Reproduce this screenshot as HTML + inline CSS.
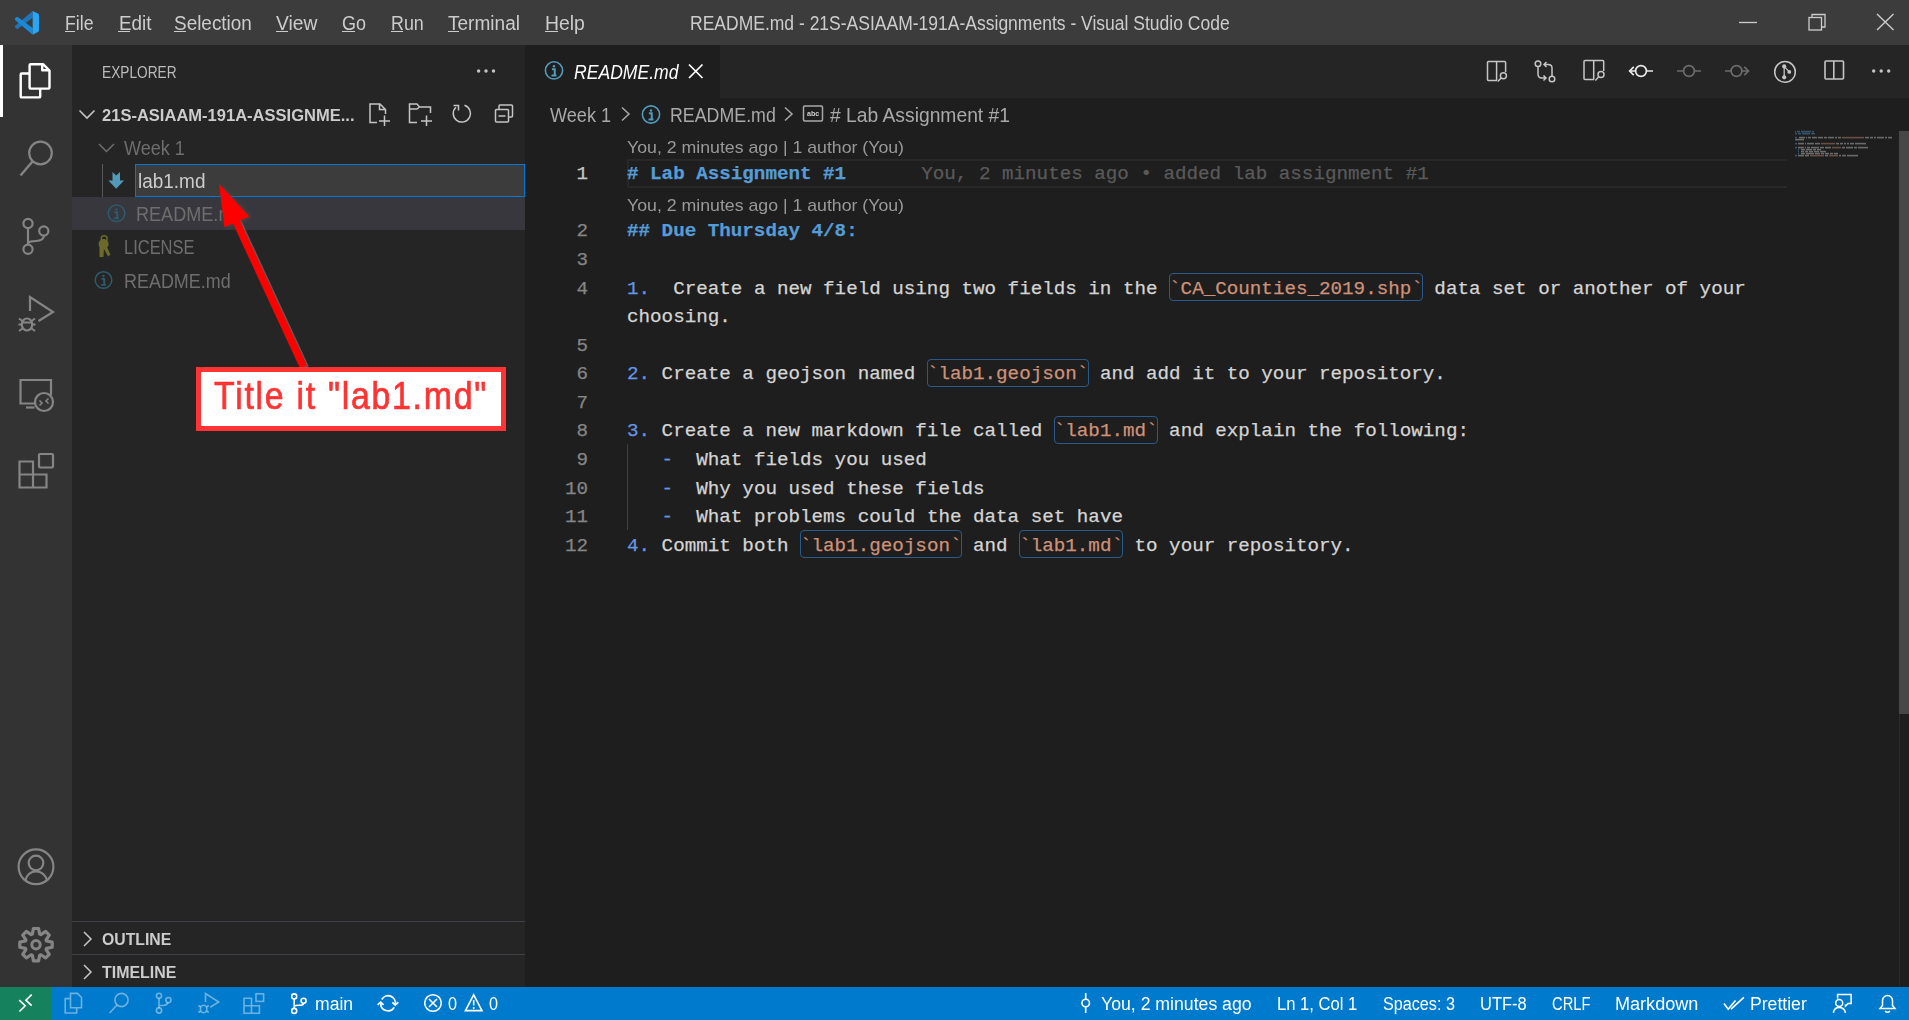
<!DOCTYPE html>
<html><head><meta charset="utf-8">
<style>
*{margin:0;padding:0;box-sizing:border-box}
html,body{width:1909px;height:1020px;overflow:hidden;background:#1e1e1e;font-family:"Liberation Sans",sans-serif;color:#cccccc}
.a{position:absolute;white-space:pre}
.mono{font-family:"Liberation Mono",monospace;font-size:19.23px;line-height:1;color:#d4d4d4;-webkit-text-stroke:0.25px currentColor}
.h{color:#569cd6;font-weight:bold}
.n{color:#6796e6}
.c{color:#ce9178}
svg{position:absolute;left:0;top:0;z-index:1}
</style></head><body>
<div class="a" style="left:0px;top:0px;width:1909px;height:45px;background:#3c3c3c;"></div>
<div class="a" style="left:0px;top:45px;width:72px;height:942px;background:#333333;"></div>
<div class="a" style="left:72px;top:45px;width:453px;height:942px;background:#252526;"></div>
<div class="a" style="left:525px;top:45px;width:1384px;height:53px;background:#252526;"></div>
<div class="a" style="left:525px;top:45px;width:195px;height:53px;background:#1e1e1e;"></div>
<div class="a" style="left:0px;top:987px;width:1909px;height:33px;background:#007acc;"></div>
<div class="a" style="left:0px;top:987px;width:51px;height:33px;background:#16825d;"></div>
<div class="a" style="left:0px;top:45px;width:3px;height:72px;background:#ffffff;"></div>
<div class="a" style="left:65.00px;top:13.00px;font-size:20px;line-height:1;color:#cccccc;font-family:'Liberation Sans',sans-serif;transform:scaleX(0.8851);transform-origin:0 0">File</div>
<div class="a" style="left:65px;top:31px;width:10px;height:1px;background:#cccccc;"></div>
<div class="a" style="left:118.50px;top:13.00px;font-size:20px;line-height:1;color:#cccccc;font-family:'Liberation Sans',sans-serif;transform:scaleX(0.9420);transform-origin:0 0">Edit</div>
<div class="a" style="left:118px;top:31px;width:12px;height:1px;background:#cccccc;"></div>
<div class="a" style="left:174.30px;top:13.00px;font-size:20px;line-height:1;color:#cccccc;font-family:'Liberation Sans',sans-serif;transform:scaleX(0.9465);transform-origin:0 0">Selection</div>
<div class="a" style="left:174px;top:31px;width:12px;height:1px;background:#cccccc;"></div>
<div class="a" style="left:276.40px;top:13.00px;font-size:20px;line-height:1;color:#cccccc;font-family:'Liberation Sans',sans-serif;transform:scaleX(0.9628);transform-origin:0 0">View</div>
<div class="a" style="left:276px;top:31px;width:12px;height:1px;background:#cccccc;"></div>
<div class="a" style="left:342.00px;top:13.00px;font-size:20px;line-height:1;color:#cccccc;font-family:'Liberation Sans',sans-serif;transform:scaleX(0.8989);transform-origin:0 0">Go</div>
<div class="a" style="left:342px;top:31px;width:13px;height:1px;background:#cccccc;"></div>
<div class="a" style="left:391.00px;top:13.00px;font-size:20px;line-height:1;color:#cccccc;font-family:'Liberation Sans',sans-serif;transform:scaleX(0.8937);transform-origin:0 0">Run</div>
<div class="a" style="left:391px;top:31px;width:12px;height:1px;background:#cccccc;"></div>
<div class="a" style="left:448.00px;top:13.00px;font-size:20px;line-height:1;color:#cccccc;font-family:'Liberation Sans',sans-serif;transform:scaleX(0.9524);transform-origin:0 0">Terminal</div>
<div class="a" style="left:448px;top:31px;width:11px;height:1px;background:#cccccc;"></div>
<div class="a" style="left:544.80px;top:13.00px;font-size:20px;line-height:1;color:#cccccc;font-family:'Liberation Sans',sans-serif;transform:scaleX(0.9684);transform-origin:0 0">Help</div>
<div class="a" style="left:545px;top:31px;width:13px;height:1px;background:#cccccc;"></div>
<div class="a" style="left:690.30px;top:12.50px;font-size:20px;line-height:1;color:#cccccc;font-family:'Liberation Sans',sans-serif;transform:scaleX(0.8753);transform-origin:0 0">README.md - 21S-ASIAAM-191A-Assignments - Visual Studio Code</div>
<div class="a" style="left:102.00px;top:64.15px;font-size:17px;line-height:1;color:#bbbbbb;font-family:'Liberation Sans',sans-serif;transform:scaleX(0.8048);transform-origin:0 0">EXPLORER</div>
<div class="a" style="left:102.00px;top:107.05px;font-size:17px;line-height:1;color:#cccccc;font-family:'Liberation Sans',sans-serif;font-weight:bold;transform:scaleX(0.9721);transform-origin:0 0">21S-ASIAAM-191A-ASSIGNME...</div>
<div class="a" style="left:123.60px;top:138.00px;font-size:20px;line-height:1;color:#6e6e6e;font-family:'Liberation Sans',sans-serif;transform:scaleX(0.9021);transform-origin:0 0">Week 1</div>
<div class="a" style="left:102px;top:164px;width:1px;height:66px;background:#585858;"></div>
<div class="a" style="left:72px;top:197px;width:453px;height:33px;background:#37373d;"></div>
<div class="a" style="left:135px;top:164px;width:390px;height:33px;background:#0078d4;"></div>
<div class="a" style="left:136px;top:165px;width:388px;height:31px;background:#3c3c3c;"></div>
<div class="a" style="left:137.80px;top:171.00px;font-size:20px;line-height:1;color:#cccccc;font-family:'Liberation Sans',sans-serif;transform:scaleX(0.9480);transform-origin:0 0">lab1.md</div>
<div class="a" style="left:135.90px;top:204.20px;font-size:20px;line-height:1;color:#6e6e6e;font-family:'Liberation Sans',sans-serif;transform:scaleX(0.9040);transform-origin:0 0">README.m</div>
<div class="a" style="left:123.50px;top:237.30px;font-size:20px;line-height:1;color:#6e6e6e;font-family:'Liberation Sans',sans-serif;transform:scaleX(0.8236);transform-origin:0 0">LICENSE</div>
<div class="a" style="left:123.50px;top:270.50px;font-size:20px;line-height:1;color:#6e6e6e;font-family:'Liberation Sans',sans-serif;transform:scaleX(0.8974);transform-origin:0 0">README.md</div>
<div class="a" style="left:72px;top:921px;width:453px;height:1px;background:#3f3f46;"></div>
<div class="a" style="left:72px;top:954px;width:453px;height:1px;background:#3f3f46;"></div>
<div class="a" style="left:102.00px;top:931.15px;font-size:17px;line-height:1;color:#cccccc;font-family:'Liberation Sans',sans-serif;font-weight:bold;transform:scaleX(0.9286);transform-origin:0 0">OUTLINE</div>
<div class="a" style="left:102.00px;top:964.15px;font-size:17px;line-height:1;color:#cccccc;font-family:'Liberation Sans',sans-serif;font-weight:bold;transform:scaleX(0.9382);transform-origin:0 0">TIMELINE</div>
<div class="a" style="left:573.60px;top:61.70px;font-size:20px;line-height:1;color:#ffffff;font-family:'Liberation Sans',sans-serif;font-style:italic;transform:scaleX(0.8787);transform-origin:0 0">README.md</div>
<div class="a" style="left:549.70px;top:105.00px;font-size:20px;line-height:1;color:#a9a9a9;font-family:'Liberation Sans',sans-serif;transform:scaleX(0.9050);transform-origin:0 0">Week 1</div>
<div class="a" style="left:670.40px;top:105.00px;font-size:20px;line-height:1;color:#a9a9a9;font-family:'Liberation Sans',sans-serif;transform:scaleX(0.8898);transform-origin:0 0">README.md</div>
<div class="a" style="left:806.80px;top:109.70px;font-size:8px;line-height:1;color:#d0d0d0;font-family:'Liberation Sans',sans-serif;font-weight:bold;transform:scaleX(0.8841);transform-origin:0 0">abc</div>
<div class="a" style="left:830.00px;top:105.00px;font-size:20px;line-height:1;color:#a9a9a9;font-family:'Liberation Sans',sans-serif;transform:scaleX(0.9636);transform-origin:0 0"># Lab Assignment #1</div>
<div class="a" style="left:627px;top:159px;width:1160px;height:2px;background:#282828;"></div>
<div class="a" style="left:627px;top:185.5px;width:1160px;height:2px;background:#282828;"></div>
<div class="a" style="left:627px;top:159px;width:2px;height:28.5px;background:#282828;"></div>
<div class="a" style="left:627.00px;top:138.85px;font-size:17px;line-height:1;color:#999999;font-family:'Liberation Sans',sans-serif;transform:scaleX(1.0418);transform-origin:0 0">You, 2 minutes ago | 1 author (You)</div>
<div class="a" style="left:627.00px;top:196.75px;font-size:17px;line-height:1;color:#999999;font-family:'Liberation Sans',sans-serif;transform:scaleX(1.0418);transform-origin:0 0">You, 2 minutes ago | 1 author (You)</div>
<div class="a mono" style="left:576.46px;top:165.31px;color:#c6c6c6">1</div>
<div class="a mono" style="left:576.46px;top:222.45px;color:#858585">2</div>
<div class="a mono" style="left:576.46px;top:251.02px;color:#858585">3</div>
<div class="a mono" style="left:576.46px;top:279.59px;color:#858585">4</div>
<div class="a mono" style="left:576.46px;top:336.73px;color:#858585">5</div>
<div class="a mono" style="left:576.46px;top:365.30px;color:#858585">6</div>
<div class="a mono" style="left:576.46px;top:393.87px;color:#858585">7</div>
<div class="a mono" style="left:576.46px;top:422.44px;color:#858585">8</div>
<div class="a mono" style="left:576.46px;top:451.01px;color:#858585">9</div>
<div class="a mono" style="left:564.92px;top:479.58px;color:#858585">10</div>
<div class="a mono" style="left:564.92px;top:508.15px;color:#858585">11</div>
<div class="a mono" style="left:564.92px;top:536.72px;color:#858585">12</div>
<div class="a mono" style="left:627px;top:165.31px"><span class="h"># Lab Assignment #1</span></div>
<div class="a mono" style="left:921.27px;top:165.31px;color:#5a5a5a">You, 2 minutes ago • added lab assignment #1</div>
<div class="a mono" style="left:627px;top:222.45px"><span class="h">## Due Thursday 4/8:</span></div>
<div class="a mono" style="left:627px;top:279.59px"><span class="n">1.</span>  Create a new field using two fields in the <span class="c">`CA_Counties_2019.shp`</span> data set or another of your</div>
<div class="a" style="left:1169.38px;top:273.3px;width:253.88px;height:27.5px;background:transparent;border:1px solid #2a5a8c;border-radius:4px"></div>
<div class="a mono" style="left:627px;top:308.16px">choosing.</div>
<div class="a mono" style="left:627px;top:365.30px"><span class="n">2.</span> Create a geojson named <span class="c">`lab1.geojson`</span> and add it to your repository.</div>
<div class="a" style="left:927.04px;top:359.01px;width:161.56px;height:27.5px;background:transparent;border:1px solid #2a5a8c;border-radius:4px"></div>
<div class="a mono" style="left:627px;top:422.44px"><span class="n">3.</span> Create a new markdown file called <span class="c">`lab1.md`</span> and explain the following:</div>
<div class="a" style="left:1053.98px;top:416.15px;width:103.86px;height:27.5px;background:transparent;border:1px solid #2a5a8c;border-radius:4px"></div>
<div class="a mono" style="left:627px;top:451.01px">   <span class="n">-</span>  What fields you used</div>
<div class="a mono" style="left:627px;top:479.58px">   <span class="n">-</span>  Why you used these fields</div>
<div class="a mono" style="left:627px;top:508.15px">   <span class="n">-</span>  What problems could the data set have</div>
<div class="a mono" style="left:627px;top:536.72px"><span class="n">4.</span> Commit both <span class="c">`lab1.geojson`</span> and <span class="c">`lab1.md`</span> to your repository.</div>
<div class="a" style="left:800.1px;top:530.43px;width:161.56px;height:27.5px;background:transparent;border:1px solid #2a5a8c;border-radius:4px"></div>
<div class="a" style="left:1019.36px;top:530.43px;width:103.86px;height:27.5px;background:transparent;border:1px solid #2a5a8c;border-radius:4px"></div>
<div class="a" style="left:627px;top:444.12px;width:1px;height:85.71000000000001px;background:#404040;"></div>
<div class="a" style="left:1899px;top:714px;width:1px;height:273px;background:#2b2b2b;"></div>
<div class="a" style="left:1899px;top:131px;width:10px;height:583px;background:#474747;"></div>
<div class="a" style="left:196px;top:367px;width:310px;height:64px;background:#ffffff;border:5px solid #ff3333;z-index:2"></div>
<div class="a" style="left:213.6px;top:377.47px;font-size:38.5px;line-height:1;color:#ff3333;letter-spacing:1.95px;-webkit-text-stroke:0.7px #ff3333;transform:scaleX(0.88);transform-origin:0 0;z-index:3">Title it &quot;lab1.md&quot;</div>
<div class="a" style="left:314.70px;top:994.70px;font-size:18px;line-height:1;color:#ffffff;font-family:'Liberation Sans',sans-serif;transform:scaleX(0.9754);transform-origin:0 0">main</div>
<div class="a" style="left:448.00px;top:994.70px;font-size:18px;line-height:1;color:#ffffff;font-family:'Liberation Sans',sans-serif;transform:scaleX(0.9009);transform-origin:0 0">0</div>
<div class="a" style="left:489.00px;top:994.70px;font-size:18px;line-height:1;color:#ffffff;font-family:'Liberation Sans',sans-serif;transform:scaleX(0.9009);transform-origin:0 0">0</div>
<div class="a" style="left:1101.40px;top:994.70px;font-size:18px;line-height:1;color:#ffffff;font-family:'Liberation Sans',sans-serif;transform:scaleX(0.9814);transform-origin:0 0">You, 2 minutes ago</div>
<div class="a" style="left:1277.00px;top:994.70px;font-size:18px;line-height:1;color:#ffffff;font-family:'Liberation Sans',sans-serif;transform:scaleX(0.9215);transform-origin:0 0">Ln 1, Col 1</div>
<div class="a" style="left:1383.40px;top:994.70px;font-size:18px;line-height:1;color:#ffffff;font-family:'Liberation Sans',sans-serif;transform:scaleX(0.8986);transform-origin:0 0">Spaces: 3</div>
<div class="a" style="left:1480.30px;top:994.70px;font-size:18px;line-height:1;color:#ffffff;font-family:'Liberation Sans',sans-serif;transform:scaleX(0.9151);transform-origin:0 0">UTF-8</div>
<div class="a" style="left:1551.60px;top:994.70px;font-size:18px;line-height:1;color:#ffffff;font-family:'Liberation Sans',sans-serif;transform:scaleX(0.8174);transform-origin:0 0">CRLF</div>
<div class="a" style="left:1615.30px;top:994.70px;font-size:18px;line-height:1;color:#ffffff;font-family:'Liberation Sans',sans-serif;transform:scaleX(1.0040);transform-origin:0 0">Markdown</div>
<div class="a" style="left:1750.00px;top:994.70px;font-size:18px;line-height:1;color:#ffffff;font-family:'Liberation Sans',sans-serif;transform:scaleX(0.9785);transform-origin:0 0">Prettier</div>
<svg width="1909" height="1020" viewBox="0 0 1909 1020">
<g transform="translate(10,6) scale(0.0333333)"><polygon points="680,150 680,350 220,695 150,640 150,600" fill="#1f76bb"/><polygon points="150,370 220,325 680,660 680,860 150,420" fill="#1b8ad6"/><polygon points="680,150 850,235 870,270 870,740 850,770 680,860" fill="#2aa4f4"/></g>
<line x1="1739" y1="22.5" x2="1757" y2="22.5" stroke="#cccccc" stroke-width="1.3"/>
<rect x="1809" y="17.5" width="12.5" height="12.5" fill="none" stroke="#cccccc" stroke-width="1.3"/>
<path d="M1812 17.5 V14.5 H1825 V27 H1821.5" fill="none" stroke="#cccccc" stroke-width="1.3"/>
<path d="M1877 14 L1893.5 30 M1893.5 14 L1877 30" stroke="#cccccc" stroke-width="1.4"/>
<path d="M29.6 73.5 H21.7 Q20.7 73.5 20.7 74.5 V96.4 Q20.7 97.4 21.7 97.4 H39.2 Q40.2 97.4 40.2 96.4 V88.6" fill="none" stroke="#ffffff" stroke-width="2.4"/>
<path d="M42 64.3 H30.6 Q29.6 64.3 29.6 65.3 V87.6 Q29.6 88.6 30.6 88.6 H48.5 Q49.5 88.6 49.5 87.6 V70.5 L43.3 64.3 Z M42.2 64.3 V70.3 H49.5" fill="none" stroke="#ffffff" stroke-width="2.4" stroke-linejoin="round"/>
<circle cx="40.5" cy="153" r="11.3" fill="none" stroke="#858585" stroke-width="2.2"/>
<line x1="32.5" y1="161.5" x2="20.5" y2="175.5" stroke="#858585" stroke-width="2.4"/>
<circle cx="28" cy="223.5" r="4.6" fill="none" stroke="#858585" stroke-width="2.2"/>
<circle cx="43.8" cy="231" r="4.6" fill="none" stroke="#858585" stroke-width="2.2"/>
<circle cx="28" cy="249.3" r="4.6" fill="none" stroke="#858585" stroke-width="2.2"/>
<path d="M28 228 V244.7 M28 243 Q30 241 36 241 Q43.8 241 43.8 235.6" fill="none" stroke="#858585" stroke-width="2.2"/>
<path d="M30 311 V297 L53 312 L38.5 321" fill="none" stroke="#858585" stroke-width="2.2" stroke-linejoin="miter"/>
<ellipse cx="27" cy="324.5" rx="5.2" ry="6" fill="none" stroke="#858585" stroke-width="2.2"/>
<path d="M19 318.5 L22.5 321 M35 318.5 L31.5 321 M18.5 324.5 H22 M32 324.5 H35.5 M19 331 L22.5 328.5 M35 331 L31.5 328.5 M22 322.5 H32" fill="none" stroke="#858585" stroke-width="2"/>
<path d="M35 403.5 H20.5 V380 H51 V395" fill="none" stroke="#858585" stroke-width="2.2"/>
<line x1="26" y1="407.5" x2="34.5" y2="407.5" stroke="#858585" stroke-width="2.2"/>
<circle cx="44" cy="402" r="9" fill="none" stroke="#858585" stroke-width="2.2"/>
<path d="M39.5 400.5 L42 403 L39.5 405.5 M48.5 398.5 L46 401 L48.5 403.5" fill="none" stroke="#858585" stroke-width="1.6"/>
<path d="M19.5 461.5 H33 V474.5 H46.5 V487.5 H19.5 Z M19.5 474.5 H33 V487.5" fill="none" stroke="#858585" stroke-width="2.2"/>
<rect x="39" y="454" width="14" height="13.5" rx="1" fill="none" stroke="#858585" stroke-width="2.2"/>
<circle cx="36" cy="866.8" r="17.4" fill="none" stroke="#858585" stroke-width="2.2"/>
<circle cx="36" cy="863" r="7.3" fill="none" stroke="#858585" stroke-width="2.2"/>
<path d="M25.5 880 Q28 871.5 36 871.5 Q44 871.5 47 880" fill="none" stroke="#858585" stroke-width="2.2"/>
<polygon points="33.43,928.50 38.57,928.50 39.65,934.11 40.91,934.63 45.64,931.43 49.27,935.06 46.07,939.79 46.59,941.05 52.20,942.13 52.20,947.27 46.59,948.35 46.07,949.61 49.27,954.34 45.64,957.97 40.91,954.77 39.65,955.29 38.57,960.90 33.43,960.90 32.35,955.29 31.09,954.77 26.36,957.97 22.73,954.34 25.93,949.61 25.41,948.35 19.80,947.27 19.80,942.13 25.41,941.05 25.93,939.79 22.73,935.06 26.36,931.43 31.09,934.63 32.35,934.11" fill="none" stroke="#858585" stroke-width="3.2" stroke-linejoin="round"/>
<circle cx="36" cy="944.7" r="4.2" fill="none" stroke="#858585" stroke-width="3"/>
<circle cx="478.6" cy="71" r="1.7" fill="#c5c5c5"/>
<circle cx="486" cy="71" r="1.7" fill="#c5c5c5"/>
<circle cx="493.5" cy="71" r="1.7" fill="#c5c5c5"/>
<path d="M79.5 110.5 L87 118 L94.5 110.5" fill="none" stroke="#c5c5c5" stroke-width="1.6"/>
<path d="M377 122.5 H370 V104 H380 L385.5 109.5 V114 M379.5 104 V109.5 H385.5" fill="none" stroke="#c5c5c5" stroke-width="1.5"/>
<path d="M379 121 H390 M384.5 115.5 V126" stroke="#c5c5c5" stroke-width="1.5"/>
<path d="M417 122.5 H409.5 V104 H417 L419.5 107 H430.5 V113 M409.5 109 H417 L419.5 107" fill="none" stroke="#c5c5c5" stroke-width="1.5"/>
<path d="M421 121 H432 M426.5 115.5 V126" stroke="#c5c5c5" stroke-width="1.5"/>
<path d="M464.5 105.3 A8.6 8.6 0 1 1 456 107.2" fill="none" stroke="#c5c5c5" stroke-width="1.5"/>
<path d="M453.5 105.5 H458.5 V110.5" fill="none" stroke="#c5c5c5" stroke-width="1.5"/>
<path d="M499 109 V106 Q499 105 500 105 H511.5 Q512.5 105 512.5 106 V116 Q512.5 117 511.5 117 H509" fill="none" stroke="#c5c5c5" stroke-width="1.5"/>
<rect x="495.5" y="109.5" width="13" height="12.5" rx="1" fill="none" stroke="#c5c5c5" stroke-width="1.5"/>
<line x1="498.5" y1="116" x2="505.5" y2="116" stroke="#c5c5c5" stroke-width="1.5"/>
<path d="M99 144 L106.5 151.5 L114 144" fill="none" stroke="#6e6e6e" stroke-width="1.5"/>
<polygon points="112.5,172 120,172 120,180.5 124,180.5 116.2,188.8 108.4,180.5 112.5,180.5" fill="#519aba"/>
<polygon points="112.5,172 116.2,175.5 120,172" fill="#252526"/>
<circle cx="116.5" cy="213.3" r="8.3" fill="none" stroke="#2f5a6c" stroke-width="1.5"/>
<circle cx="116.5" cy="209.33444444444444" r="1.198888888888889" fill="#2f5a6c"/>
<path d="M114.47111111111111 212.19333333333336 H117.23777777777778 V217.7266666666667 M114.10222222222222 218.1877777777778 H118.89777777777778" fill="none" stroke="#2f5a6c" stroke-width="1.936666666666667"/>
<circle cx="104.2" cy="238.8" r="3" fill="none" stroke="#6b6a2a" stroke-width="1.4"/>
<g fill="#6b6a2a"><circle cx="103.6" cy="244" r="5"/><path d="M99.5 246 H104 L103.5 257 H99.5 Z"/><path d="M103 247 L106.5 246 L110.5 254.5 L108 256.5 Z"/></g>
<circle cx="103.5" cy="280" r="8.3" fill="none" stroke="#2f5a6c" stroke-width="1.5"/>
<circle cx="103.5" cy="276.03444444444443" r="1.198888888888889" fill="#2f5a6c"/>
<path d="M101.47111111111111 278.8933333333333 H104.23777777777778 V284.4266666666667 M101.10222222222222 284.8877777777778 H105.89777777777778" fill="none" stroke="#2f5a6c" stroke-width="1.936666666666667"/>
<path d="M84 932 L91 939 L84 946" fill="none" stroke="#c5c5c5" stroke-width="1.5"/>
<path d="M84 965 L91 972 L84 979" fill="none" stroke="#c5c5c5" stroke-width="1.5"/>
<circle cx="554" cy="70.4" r="8.6" fill="none" stroke="#519aba" stroke-width="1.6"/>
<circle cx="554" cy="66.29111111111112" r="1.2422222222222221" fill="#519aba"/>
<path d="M551.8977777777778 69.25333333333334 H554.7644444444444 V74.98666666666668 M551.5155555555556 75.46444444444445 H556.4844444444444" fill="none" stroke="#519aba" stroke-width="2.0066666666666664"/>
<path d="M689 64.5 L702.5 78 M702.5 64.5 L689 78" stroke="#ffffff" stroke-width="1.7"/>
<path d="M1497 80.5 H1488.5 Q1487.5 80.5 1487.5 79.5 V62.5 Q1487.5 61.6 1488.5 61.6 H1504.6 Q1505.6 61.6 1505.6 62.6 V72 M1496.6 61.6 V80.5" fill="none" stroke="#c5c5c5" stroke-width="1.5"/>
<circle cx="1503.4" cy="75.7" r="3" fill="none" stroke="#c5c5c5" stroke-width="1.5"/><line x1="1501.2" y1="77.9" x2="1497.7" y2="81.6" stroke="#c5c5c5" stroke-width="1.5"/>
<circle cx="1538" cy="63.7" r="2.8" fill="none" stroke="#c5c5c5" stroke-width="1.5"/><circle cx="1552" cy="79" r="2.8" fill="none" stroke="#c5c5c5" stroke-width="1.5"/>
<path d="M1538 66.5 V74 Q1538 78 1542 78 H1546 M1543.5 75.5 L1546 78 L1543.5 80.5" fill="none" stroke="#c5c5c5" stroke-width="1.5"/>
<path d="M1552 76.2 V68 Q1552 64.5 1548 64.5 H1544 M1546.5 62 L1544 64.5 L1546.5 67" fill="none" stroke="#c5c5c5" stroke-width="1.5"/>
<path d="M1603.7 71 V61.4 Q1603.7 60.4 1602.7 60.4 H1585 Q1584 60.4 1584 61.4 V78.6 Q1584 79.6 1585 79.6 H1594 M1593.7 60.4 V79.6" fill="none" stroke="#c5c5c5" stroke-width="1.5"/>
<circle cx="1601" cy="74.6" r="3" fill="none" stroke="#c5c5c5" stroke-width="1.5"/><line x1="1598.8" y1="76.8" x2="1595.3" y2="80.5" stroke="#c5c5c5" stroke-width="1.5"/>
<circle cx="1641" cy="71" r="5.4" fill="none" stroke="#e8e8e8" stroke-width="1.7"/>
<path d="M1629.5 71 H1635.6 M1646.4 71 H1653 M1633.8 66.8 L1629.6 71 L1633.8 75.2" fill="none" stroke="#e8e8e8" stroke-width="1.7"/>
<circle cx="1689" cy="71" r="5.4" fill="none" stroke="#6c6c6c" stroke-width="1.7"/>
<path d="M1677 71 H1683.6 M1694.4 71 H1701" fill="none" stroke="#6c6c6c" stroke-width="1.7"/>
<circle cx="1736.5" cy="71" r="5.4" fill="none" stroke="#6c6c6c" stroke-width="1.7"/>
<path d="M1725 71 H1731.1 M1741.9 71 H1748.5 M1744.3 66.8 L1748.5 71 L1744.3 75.2" fill="none" stroke="#6c6c6c" stroke-width="1.7"/>
<circle cx="1785" cy="71.9" r="10.3" fill="none" stroke="#c5c5c5" stroke-width="1.5"/>
<path d="M1784.2 66.4 V77.3 M1784.2 66.4 L1789.3 71.9" fill="none" stroke="#c5c5c5" stroke-width="1.3"/><circle cx="1784.2" cy="66.4" r="2.1" fill="#c5c5c5"/><circle cx="1784.2" cy="77.3" r="2.1" fill="#c5c5c5"/><circle cx="1789.3" cy="71.9" r="1.9" fill="#c5c5c5"/>
<rect x="1825" y="61" width="18.5" height="18" rx="1" fill="none" stroke="#c5c5c5" stroke-width="1.6"/><line x1="1833.8" y1="61" x2="1833.8" y2="79" stroke="#c5c5c5" stroke-width="1.6"/>
<circle cx="1873.7" cy="71" r="1.7" fill="#c5c5c5"/>
<circle cx="1881.2" cy="71" r="1.7" fill="#c5c5c5"/>
<circle cx="1888.7" cy="71" r="1.7" fill="#c5c5c5"/>
<path d="M622 107.5 L629 114 L622 120.5" fill="none" stroke="#a9a9a9" stroke-width="1.5"/>
<circle cx="651" cy="114.5" r="8.6" fill="none" stroke="#519aba" stroke-width="1.6"/>
<circle cx="651" cy="110.39111111111112" r="1.2422222222222221" fill="#519aba"/>
<path d="M648.8977777777778 113.35333333333334 H651.7644444444444 V119.08666666666667 M648.5155555555556 119.56444444444445 H653.4844444444444" fill="none" stroke="#519aba" stroke-width="2.0066666666666664"/>
<path d="M785 107.5 L792 114 L785 120.5" fill="none" stroke="#a9a9a9" stroke-width="1.5"/>
<rect x="803.5" y="106" width="19" height="15" rx="1.2" fill="none" stroke="#a9a9a9" stroke-width="1.5"/>
<g opacity="0.42"><rect x="1795" y="130.8" width="1" height="1.6" fill="#569cd6"/><rect x="1797" y="130.8" width="3" height="1.6" fill="#569cd6"/><rect x="1801" y="130.8" width="10" height="1.6" fill="#569cd6"/><rect x="1812" y="130.8" width="2" height="1.6" fill="#569cd6"/><rect x="1795" y="132.8" width="2" height="1.6" fill="#569cd6"/><rect x="1798" y="132.8" width="3" height="1.6" fill="#569cd6"/><rect x="1802" y="132.8" width="8" height="1.6" fill="#569cd6"/><rect x="1811" y="132.8" width="4" height="1.6" fill="#569cd6"/><rect x="1795" y="136.8" width="2" height="1.6" fill="#6796e6"/><rect x="1799" y="136.8" width="6" height="1.6" fill="#d4d4d4"/><rect x="1806" y="136.8" width="1" height="1.6" fill="#d4d4d4"/><rect x="1808" y="136.8" width="3" height="1.6" fill="#d4d4d4"/><rect x="1812" y="136.8" width="5" height="1.6" fill="#d4d4d4"/><rect x="1818" y="136.8" width="5" height="1.6" fill="#d4d4d4"/><rect x="1824" y="136.8" width="3" height="1.6" fill="#d4d4d4"/><rect x="1828" y="136.8" width="6" height="1.6" fill="#d4d4d4"/><rect x="1835" y="136.8" width="2" height="1.6" fill="#d4d4d4"/><rect x="1838" y="136.8" width="3" height="1.6" fill="#d4d4d4"/><rect x="1842" y="136.8" width="22" height="1.6" fill="#ce9178"/><rect x="1865" y="136.8" width="4" height="1.6" fill="#d4d4d4"/><rect x="1870" y="136.8" width="3" height="1.6" fill="#d4d4d4"/><rect x="1874" y="136.8" width="2" height="1.6" fill="#d4d4d4"/><rect x="1877" y="136.8" width="7" height="1.6" fill="#d4d4d4"/><rect x="1885" y="136.8" width="2" height="1.6" fill="#d4d4d4"/><rect x="1888" y="136.8" width="4" height="1.6" fill="#d4d4d4"/><rect x="1795" y="138.8" width="9" height="1.6" fill="#d4d4d4"/><rect x="1795" y="142.8" width="2" height="1.6" fill="#6796e6"/><rect x="1798" y="142.8" width="6" height="1.6" fill="#d4d4d4"/><rect x="1805" y="142.8" width="1" height="1.6" fill="#d4d4d4"/><rect x="1807" y="142.8" width="7" height="1.6" fill="#d4d4d4"/><rect x="1815" y="142.8" width="5" height="1.6" fill="#d4d4d4"/><rect x="1821" y="142.8" width="14" height="1.6" fill="#ce9178"/><rect x="1836" y="142.8" width="3" height="1.6" fill="#d4d4d4"/><rect x="1840" y="142.8" width="3" height="1.6" fill="#d4d4d4"/><rect x="1844" y="142.8" width="2" height="1.6" fill="#d4d4d4"/><rect x="1847" y="142.8" width="2" height="1.6" fill="#d4d4d4"/><rect x="1850" y="142.8" width="4" height="1.6" fill="#d4d4d4"/><rect x="1855" y="142.8" width="11" height="1.6" fill="#d4d4d4"/><rect x="1795" y="146.8" width="2" height="1.6" fill="#6796e6"/><rect x="1798" y="146.8" width="6" height="1.6" fill="#d4d4d4"/><rect x="1805" y="146.8" width="1" height="1.6" fill="#d4d4d4"/><rect x="1807" y="146.8" width="3" height="1.6" fill="#d4d4d4"/><rect x="1811" y="146.8" width="8" height="1.6" fill="#d4d4d4"/><rect x="1820" y="146.8" width="4" height="1.6" fill="#d4d4d4"/><rect x="1825" y="146.8" width="6" height="1.6" fill="#d4d4d4"/><rect x="1832" y="146.8" width="9" height="1.6" fill="#ce9178"/><rect x="1842" y="146.8" width="3" height="1.6" fill="#d4d4d4"/><rect x="1846" y="146.8" width="7" height="1.6" fill="#d4d4d4"/><rect x="1854" y="146.8" width="3" height="1.6" fill="#d4d4d4"/><rect x="1858" y="146.8" width="10" height="1.6" fill="#d4d4d4"/><rect x="1798" y="148.8" width="1" height="1.6" fill="#6796e6"/><rect x="1801" y="148.8" width="4" height="1.6" fill="#d4d4d4"/><rect x="1806" y="148.8" width="6" height="1.6" fill="#d4d4d4"/><rect x="1813" y="148.8" width="3" height="1.6" fill="#d4d4d4"/><rect x="1817" y="148.8" width="4" height="1.6" fill="#d4d4d4"/><rect x="1798" y="150.8" width="1" height="1.6" fill="#6796e6"/><rect x="1801" y="150.8" width="3" height="1.6" fill="#d4d4d4"/><rect x="1805" y="150.8" width="3" height="1.6" fill="#d4d4d4"/><rect x="1809" y="150.8" width="4" height="1.6" fill="#d4d4d4"/><rect x="1814" y="150.8" width="5" height="1.6" fill="#d4d4d4"/><rect x="1820" y="150.8" width="6" height="1.6" fill="#d4d4d4"/><rect x="1798" y="152.8" width="1" height="1.6" fill="#6796e6"/><rect x="1801" y="152.8" width="4" height="1.6" fill="#d4d4d4"/><rect x="1806" y="152.8" width="8" height="1.6" fill="#d4d4d4"/><rect x="1815" y="152.8" width="5" height="1.6" fill="#d4d4d4"/><rect x="1821" y="152.8" width="3" height="1.6" fill="#d4d4d4"/><rect x="1825" y="152.8" width="4" height="1.6" fill="#d4d4d4"/><rect x="1830" y="152.8" width="3" height="1.6" fill="#d4d4d4"/><rect x="1834" y="152.8" width="4" height="1.6" fill="#d4d4d4"/><rect x="1795" y="154.8" width="2" height="1.6" fill="#6796e6"/><rect x="1798" y="154.8" width="6" height="1.6" fill="#d4d4d4"/><rect x="1805" y="154.8" width="4" height="1.6" fill="#d4d4d4"/><rect x="1810" y="154.8" width="14" height="1.6" fill="#ce9178"/><rect x="1825" y="154.8" width="3" height="1.6" fill="#d4d4d4"/><rect x="1829" y="154.8" width="9" height="1.6" fill="#ce9178"/><rect x="1839" y="154.8" width="2" height="1.6" fill="#d4d4d4"/><rect x="1842" y="154.8" width="4" height="1.6" fill="#d4d4d4"/><rect x="1847" y="154.8" width="11" height="1.6" fill="#d4d4d4"/></g>
<defs><filter id="sh" x="-50%" y="-50%" width="200%" height="200%"><feGaussianBlur stdDeviation="2"/></filter></defs>
<g transform="translate(1.8,0.8)" opacity="0.6"><line x1="303.5" y1="367" x2="235.5" y2="220" stroke="#7a8585" stroke-width="7.6"/><polygon points="219,183.7 224.5,227.3 249.3,216.5" fill="#555" filter="url(#sh)"/></g>
<line x1="303.5" y1="367" x2="235.5" y2="220" stroke="#ff0000" stroke-width="7.6"/>
<polygon points="219,183.7 224.5,227.3 249.3,216.5" fill="#ff0000"/>
<path d="M19.2 1000.2 L25.2 1005.7 L19.4 1011.5 M31.7 994.7 L25.9 1000.2 L31.7 1005.7" fill="none" stroke="#ffffff" stroke-width="1.6"/>
<g fill="none" stroke="rgba(255,255,255,0.42)" stroke-width="1.6"><path d="M69.7 998.6 H65.2 V1013 H76.7 V1008.3"/><path d="M77.5 993.4 H70.5 V1007.8 H81.5 V997.5 L77.5 993.4 Z"/><circle cx="121.5" cy="1000" r="6.6"/><line x1="117" y1="1005" x2="109.6" y2="1013"/><circle cx="159" cy="995.8" r="2.6"/><circle cx="168.4" cy="1000.1" r="2.6"/><circle cx="159" cy="1010.5" r="2.6"/><path d="M159 998.4 V1007.9 M159 1005.5 H163.5 Q166.5 1005.5 168 1002.6"/><path d="M205.5 1002 V993.5 L218.7 1002 L210.2 1007.2"/><ellipse cx="203.6" cy="1009" rx="3.2" ry="3.8"/><path d="M198.5 1005.5 L200.5 1007 M208.7 1005.5 L206.7 1007 M198.5 1012.5 L200.5 1011 M208.7 1012.5 L206.7 1011"/><path d="M244 998.2 H251.5 V1005.7 H259.4 V1013.3 H244 Z M244 1005.7 H251.5 V1013.3"/><rect x="256" y="993.8" width="7.6" height="7.6"/></g>
<g fill="none" stroke="#ffffff" stroke-width="1.6"><circle cx="294.2" cy="996.4" r="2.5"/><circle cx="303.6" cy="1000.7" r="2.5"/><circle cx="294.2" cy="1010.9" r="2.5"/><path d="M294.2 998.9 V1008.4 M294.2 1006.2 Q295.5 1005.3 299 1005.3 Q303.6 1005.3 303.6 1003.2"/></g>
<g fill="none" stroke="#ffffff" stroke-width="1.7"><path d="M381.8 999.5 A7.2 7.2 0 0 1 395.2 1004.3"/><path d="M394.2 1007.3 A7.2 7.2 0 0 1 380.8 1003.2"/><path d="M392.3 1002.3 L395.3 1005 L398.3 1002.2"/><path d="M377.6 1004.8 L380.7 1002.2 L383.6 1004.8"/></g>
<g fill="none" stroke="#ffffff" stroke-width="1.6"><circle cx="433" cy="1003" r="8.3"/><path d="M429 999 L437 1007 M437 999 L429 1007"/><path d="M473.7 994.8 L482 1010.6 H465.4 Z"/><path d="M473.7 1000 V1005.5"/></g>
<circle cx="473.7" cy="1008" r="1" fill="#ffffff"/>
<g fill="none" stroke="#ffffff" stroke-width="1.6"><circle cx="1085.7" cy="1003" r="3.8"/><path d="M1085.7 993 V999.2 M1085.7 1006.8 V1013"/></g>
<path d="M1724 1003.6 L1728.2 1009.2 L1735.5 1000.5 M1731 1009.2 L1743.9 997.4" fill="none" stroke="#ffffff" stroke-width="1.6"/>
<g fill="none" stroke="#ffffff" stroke-width="1.5"><circle cx="1839.2" cy="1003.1" r="3.5"/><path d="M1833.4 1012.8 Q1834 1007.6 1839.2 1007.6 Q1844.5 1007.6 1845.4 1012.8"/><path d="M1837.6 998.5 V994.5 H1851.1 V1003.6 H1848 L1845.5 1006 V1004.5"/></g>
<g fill="none" stroke="#ffffff" stroke-width="1.5"><path d="M1880 1008.5 H1895 L1892.5 1005.5 V1000.5 A5 5 0 0 0 1882.5 1000.5 V1005.5 Z"/><path d="M1885 1011 Q1887.5 1013.5 1890 1011"/></g>
</svg>
</body></html>
